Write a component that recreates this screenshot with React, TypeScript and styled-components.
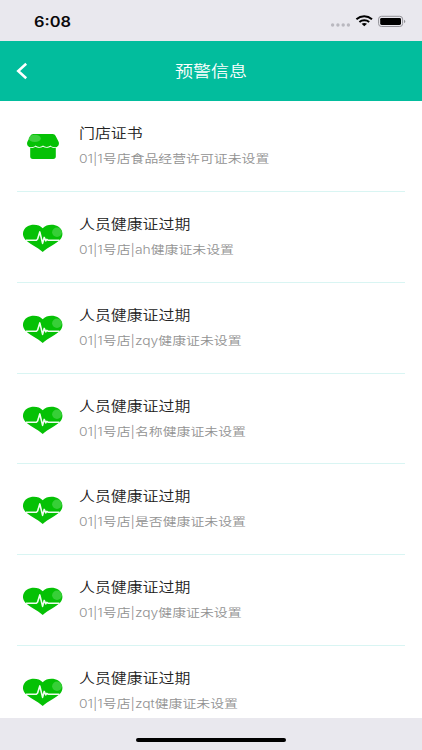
import styled, { createGlobalStyle } from "styled-components";

type AlertKind = "store" | "health";

interface AlertItem {
  id: number;
  kind: AlertKind;
  title: string;
  content: string;
}

const alerts: AlertItem[] = [
  { id: 1, kind: "store", title: "门店证书", content: "01|1号店食品经营许可证未设置" },
  { id: 2, kind: "health", title: "人员健康证过期", content: "01|1号店|ah健康证未设置" },
  { id: 3, kind: "health", title: "人员健康证过期", content: "01|1号店|zqy健康证未设置" },
  { id: 4, kind: "health", title: "人员健康证过期", content: "01|1号店|名称健康证未设置" },
  { id: 5, kind: "health", title: "人员健康证过期", content: "01|1号店|是否健康证未设置" },
  { id: 6, kind: "health", title: "人员健康证过期", content: "01|1号店|zqy健康证未设置" },
  { id: 7, kind: "health", title: "人员健康证过期", content: "01|1号店|zqt健康证未设置" },
];

const App = () => {
  return (
    <Screen>
      <GlobalStyle />
      <StatusBar>
        <Clock>6:08</Clock>
        <StatusIcons />
      </StatusBar>
      <Header>
        <BackButton type="button" aria-label="返回">
          <svg width="12" height="18" viewBox="0 0 12 18" fill="none">
            <path d="M10.2 1.8L2.2 9L10.2 16.2" stroke="#fff" strokeWidth="2.5" />
          </svg>
        </BackButton>
        <HeaderTitle>预警信息</HeaderTitle>
      </Header>
      <AlertList>
        {alerts.map(({ id, kind, title, content }) => (
          <AlertRow key={id}>
            <IconBox>{kind === "store" ? <StoreIcon /> : <HealthIcon />}</IconBox>
            <AlertText>
              <AlertTitle>{title}</AlertTitle>
              <AlertContent>{content}</AlertContent>
            </AlertText>
          </AlertRow>
        ))}
      </AlertList>
      <HomeArea>
        <HomeIndicator />
      </HomeArea>
    </Screen>
  );
};

export default App;

// -------------------------------------------------------

const StatusIcons = () => {
  return (
    <svg width="78" height="14" viewBox="0 0 78 14" fill="none">
      <g fill="#b9b8bf">
        <circle cx="2.6" cy="11" r="1.7" />
        <circle cx="7.9" cy="11" r="1.7" />
        <circle cx="13.2" cy="11" r="1.7" />
        <circle cx="18.4" cy="11" r="1.7" />
      </g>
      <g stroke="#000" strokeWidth="2">
        <path d="M26.4 5.2C31 1.4 37.4 1.4 42 5.2" />
        <path d="M29.4 8C32.2 5.7 36.4 5.7 39.2 8" />
      </g>
      <path d="M31.6 9.8C33.3 8.6 35.3 8.6 37 9.8L34.3 12.2Z" fill="#000" />
      <rect x="48.6" y="2.3" width="24" height="10.2" rx="2.8" stroke="#929197" />
      <rect x="50.2" y="3.9" width="20.8" height="7" rx="1.4" fill="#000" />
      <path d="M74 5.7C75.8 6.1 75.8 8.6 74 9Z" fill="#929197" />
    </svg>
  );
};

const StoreIcon = () => {
  return (
    <svg width="34" height="28" viewBox="0 0 34 28">
      <path
        d="M7.4 1H26.6C28.2 1 29 1.7 29.8 3.2L32.6 8.7C33.8 11.6 31.8 14.3 28.8 14.3C26.7 14.3 25.3 13.6 24.4 12.6C22.8 14.4 18.8 14.4 17 12.6C15.2 14.4 11.2 14.4 9.6 12.6C8.7 13.6 7.3 14.3 5.2 14.3C2.2 14.3 0.2 11.6 1.4 8.7L4.2 3.2C5 1.7 5.8 1 7.4 1Z"
        fill="#05c105"
      />
      <path
        d="M4.2 15.1C6.4 15.1 8.2 14.6 9.6 13.7C11.5 15.2 15 15.2 17 13.7C19 15.2 22.5 15.2 24.4 13.7C25.8 14.6 27.6 15.1 29.8 15.1V23.6C29.8 25.2 28.9 26 27.2 26H6.8C5.1 26 4.2 25.2 4.2 23.6Z"
        fill="#05c105"
      />
      <ellipse cx="8.8" cy="5.4" rx="6" ry="3.6" fill="#3dd13d" />
    </svg>
  );
};

const HealthIcon = () => {
  return (
    <svg width="40" height="30" viewBox="0 0 40 30">
      <path
        d="M19.7 5.2C23.2 1.2 30.6 0.8 35.2 3.4C40 6.4 40.8 12.4 37.2 16.6C33.5 20.7 25 24.2 19.7 29C14.4 24.2 5.9 20.7 2.2 16.6C-1.4 12.4 -0.6 6.4 4.2 3.4C8.8 0.8 16.2 1.2 19.7 5.2Z"
        fill="#05c105"
      />
      <ellipse cx="34" cy="9.3" rx="4.9" ry="4.7" fill="#37cf37" />
      <path
        d="M3 17.2H13.4L14.6 16L16.8 8.9L19.6 20.4L21.2 14.4L22.8 17.8L23.8 16.4L25 17.2H36.4"
        fill="none"
        stroke="#effdef"
        strokeWidth="1.6"
        strokeLinejoin="round"
      />
    </svg>
  );
};

// -------------------------------------------------------

const GlobalStyle = createGlobalStyle`
  * {
    box-sizing: border-box;
  }
  body {
    margin: 0;
    background: #fff;
    font-family: Inter, "Noto Sans CJK SC", sans-serif;
  }
`;

const Screen = styled.div`
  display: flex;
  flex-direction: column;
  height: 750px;
  overflow: hidden;
`;

const StatusBar = styled.div`
  display: flex;
  flex: none;
  justify-content: space-between;
  height: 41px;
  padding: 14px 14px 0 34px;
  background: #e9e8ee;
`;

const Clock = styled.span`
  font: 600 14px/15px Inter, sans-serif;
  color: #09090b;
  transform: scaleX(1.17);
  transform-origin: left;
`;

const Header = styled.header`
  display: grid;
  flex: none;
  grid-template-columns: 60px 1fr 60px;
  align-items: center;
  height: 60px;
  background: #02bd9d;
`;

const BackButton = styled.button`
  display: flex;
  padding: 0 0 0 16px;
  border: 0;
  background: none;
`;

const HeaderTitle = styled.h1`
  margin: 0;
  padding-top: 1px;
  font-size: 15.4px;
  font-weight: 350;
  line-height: 22px;
  text-align: center;
  color: #fff;
  transform: scaleX(1.17);
`;

const AlertList = styled.ul`
  flex: 1;
  min-height: 0;
  margin: 0;
  padding: 0 17px;
  overflow: hidden;
  list-style: none;
`;

const AlertRow = styled.li`
  display: flex;
  height: 90.85px;
  border-bottom: 1px solid #d9f5f3;
`;

const IconBox = styled.div`
  display: flex;
  flex: none;
  justify-content: center;
  align-items: center;
  width: 51px;
  height: 92px;
`;

const AlertText = styled.div`
  padding: 22px 0 0 11px;
  white-space: nowrap;
`;

/* The glyphs are wider than they are tall */
const AlertTitle = styled.p`
  margin: 0;
  font-size: 13.6px;
  font-weight: 350;
  line-height: 20px;
  color: #222;
  transform: scaleX(1.17);
  transform-origin: left;
`;

const AlertContent = styled.p`
  margin: 6px 0 0;
  font-size: 11.8px;
  font-weight: 350;
  line-height: 20px;
  color: #929292;
  transform: scaleX(1.176);
  transform-origin: left;
`;

const HomeArea = styled.div`
  display: flex;
  flex: none;
  justify-content: center;
  height: 32px;
  padding-top: 20px;
  background: #e9e8ee;
`;

const HomeIndicator = styled.div`
  width: 150px;
  height: 4px;
  border-radius: 2px;
  background: #000;
`;
